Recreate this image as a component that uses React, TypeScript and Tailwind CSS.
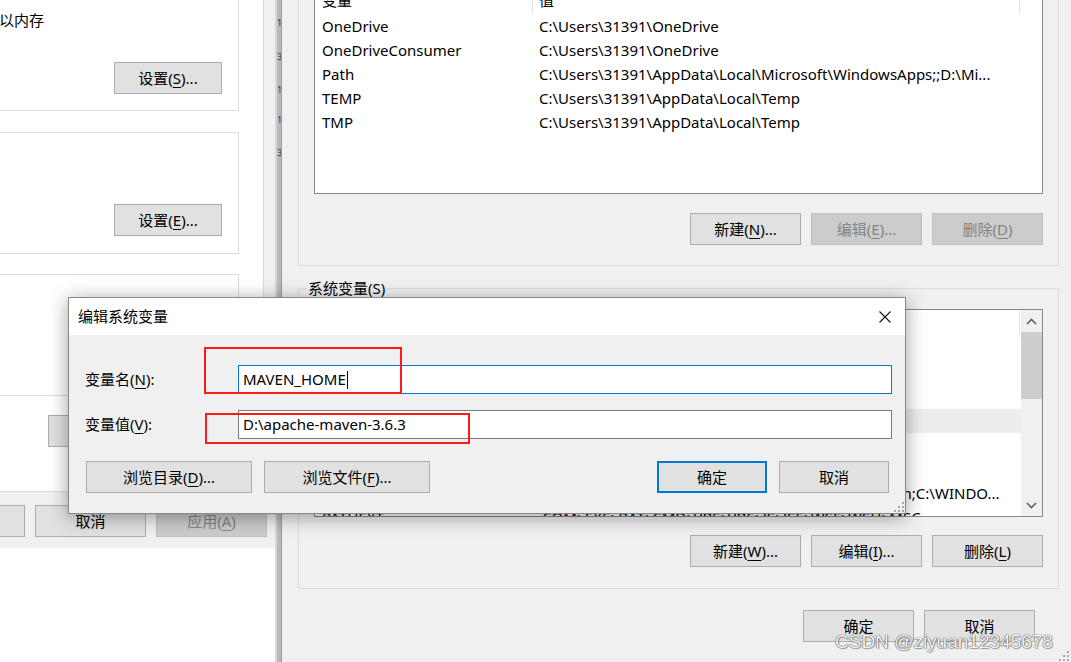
import React from "react";

type BtnProps = {
  children: React.ReactNode;
  className?: string;
  disabled?: boolean;
  primary?: boolean;
};

const Btn = ({ children, className = "w-[111px]", disabled, primary }: BtnProps) => (
  <div
    className={`h-[32px] shrink-0 flex items-center justify-center text-[15px] leading-none whitespace-nowrap ${
      disabled
        ? "bg-[#cccccc] border border-[#bfbfbf] text-[#838383]"
        : primary
        ? "bg-[#e1e1e1] border-2 border-[#0078d7] text-black"
        : "bg-[#e1e1e1] border border-[#adadad] text-black"
    } ${className}`}
  >
    {children}
  </div>
);

// mnemonic letter
const Key = ({ k }: { k: string }) => (
  <span className="underline underline-offset-[3px] decoration-1">{k}</span>
);

const Grip = () => (
  <svg width="12" height="12" viewBox="0 0 12 12">
    <rect x="9" y="1" width="2" height="2" fill="#a8a8a8" />
    <rect x="5" y="5" width="2" height="2" fill="#a8a8a8" />
    <rect x="9" y="5" width="2" height="2" fill="#a8a8a8" />
    <rect x="1" y="9" width="2" height="2" fill="#a8a8a8" />
    <rect x="5" y="9" width="2" height="2" fill="#a8a8a8" />
    <rect x="9" y="9" width="2" height="2" fill="#a8a8a8" />
  </svg>
);

const Chevron = ({ down }: { down?: boolean }) => (
  <svg width="11" height="7" viewBox="0 0 11 7">
    <polyline
      points={down ? "1,1 5.5,5.5 10,1" : "1,6 5.5,1.5 10,6"}
      fill="none"
      stroke="#606060"
      strokeWidth="1.6"
    />
  </svg>
);

const Scrollbar = () => (
  <div className="w-[21px] shrink-0 bg-[#f0f0f0] flex flex-col">
    <div className="h-[22px] flex items-center justify-center">
      <Chevron />
    </div>
    <div className="h-[67px] bg-[#cdcdcd]" />
    <div className="flex-1" />
    <div className="h-[22px] flex items-center justify-center">
      <Chevron down />
    </div>
  </div>
);

type Row = [string, string];

const ListBox = ({
  rows,
  className,
  selected = -1,
  scroll,
}: {
  rows: Row[];
  className: string;
  selected?: number;
  scroll?: boolean;
}) => (
  <div className={`border border-[#828790] bg-white flex overflow-hidden shrink-0 ${className}`}>
    <div className="flex-1 min-w-0 flex flex-col">
      <div className="h-[27px] shrink-0 flex">
        <div className="w-[218px] shrink-0 flex items-center pl-[7px] border-r border-[#e5e5e5]">变量</div>
        <div className="w-[487px] shrink-0 flex items-center pl-[6px] border-r border-[#e5e5e5]">值</div>
      </div>
      {rows.map(([n, v], i) => (
        <div
          key={i}
          className={`h-[24px] shrink-0 flex items-center whitespace-nowrap ${
            i === selected ? "bg-[#ededed]" : ""
          }`}
        >
          <div className="w-[218px] shrink-0 pl-[7px] overflow-hidden">{n}</div>
          <div className="w-[487px] shrink-0 pl-[6px] overflow-hidden">{v}</div>
        </div>
      ))}
    </div>
    {scroll && <Scrollbar />}
  </div>
);

const userRows: Row[] = [
  ["OneDrive", "C:\\Users\\31391\\OneDrive"],
  ["OneDriveConsumer", "C:\\Users\\31391\\OneDrive"],
  ["Path", "C:\\Users\\31391\\AppData\\Local\\Microsoft\\WindowsApps;;D:\\Mi..."],
  ["TEMP", "C:\\Users\\31391\\AppData\\Local\\Temp"],
  ["TMP", "C:\\Users\\31391\\AppData\\Local\\Temp"],
];

const sysRows: Row[] = [
  ["ComSpec", "C:\\WINDOWS\\system32\\cmd.exe"],
  ["DriverData", "C:\\Windows\\System32\\Drivers\\DriverData"],
  ["JAVA_HOME", "C:\\Program Files\\Java\\jdk1.8.0_261"],
  ["MAVEN_HOME", "D:\\apache-maven-3.6.3"],
  ["NUMBER_OF_PROCESSORS", "12"],
  ["OS", "Windows_NT"],
  ["Path", "C:\\Program Files\\Common Files\\Oracle\\Java\\javapath;C:\\WINDO..."],
  ["PATHEXT", ".COM;.EXE;.BAT;.CMD;.VBS;.VBE;.JS;.JSE;.WSF;.WSH;.MSC"],
];

const LeftWindow = () => (
  <div className="absolute left-0 top-0 w-[277px] h-[548px] bg-[#f0f0f0] flex flex-col overflow-hidden">
    <div className="w-[264px] h-[492px] shrink-0 bg-white border-r border-b border-[#d9d9d9] pr-[24px] flex flex-col items-end">
      <div className="-mt-[12px] w-[251px] h-[123px] shrink-0 border border-[#dcdcdc] pt-[21px] pb-[16px] pr-[16px] flex flex-col items-end justify-between self-start -ml-[12px]">
        <div className="self-start pl-[10px] leading-[20px] text-[15px]">以内存</div>
        <Btn className="w-[108px]">
          设置(<Key k="S" />)...
        </Btn>
      </div>
      <div className="mt-[21px] w-[251px] h-[122px] shrink-0 border border-[#dcdcdc] pb-[17px] pr-[16px] flex flex-col items-end justify-end self-start -ml-[12px]">
        <Btn className="w-[108px]">
          设置(<Key k="E" />)...
        </Btn>
      </div>
      <div className="mt-[20px] w-[251px] h-[122px] shrink-0 border border-[#dcdcdc] self-start -ml-[12px]" />
      <Btn className="mt-[19px] w-[191px]">
        环境变量(<Key k="N" />)...
      </Btn>
    </div>
    <div className="mt-[13px] flex justify-end gap-[10px] pr-[10px]">
      <Btn>确定</Btn>
      <Btn>取消</Btn>
      <Btn disabled>
        应用(<Key k="A" />)
      </Btn>
    </div>
  </div>
);

const RightWindow = () => (
  <div className="absolute left-[275px] top-0 h-[662px] flex">
    <div className="relative w-[7px] h-full bg-[#b9b9b9] border-l-2 border-l-[#d6d6d6] border-r border-r-[#9c9c9c] overflow-hidden text-[9px] leading-none text-[#333]">
      <span className="absolute left-0 top-[18px]">1</span>
      <span className="absolute left-0 top-[52px]">3</span>
      <span className="absolute left-0 top-[85px]">1</span>
      <span className="absolute left-0 top-[115px]">1</span>
      <span className="absolute left-0 top-[148px]">3</span>
    </div>
    <div className="relative w-[789px] h-full bg-[#f0f0f0] pl-[16px] flex flex-col">
      <div className="-mt-[20px] w-[761px] h-[286px] shrink-0 border border-[#dcdcdc] px-[15px] pt-[5px] flex flex-col">
        <ListBox rows={userRows} className="h-[208px]" />
        <div className="mt-[19px] flex justify-end gap-[10px]">
          <Btn>
            新建(<Key k="N" />)...
          </Btn>
          <Btn disabled>
            编辑(<Key k="E" />)...
          </Btn>
          <Btn disabled>
            删除(<Key k="D" />)
          </Btn>
        </div>
      </div>

      <div className="relative mt-[22px] w-[761px] h-[301px] shrink-0 border border-[#dcdcdc] px-[15px] pt-[20px] flex flex-col">
        <span className="absolute left-[8px] -top-[11px] bg-[#f0f0f0] px-[1px] leading-[20px] text-[15px]">
          系统变量(<Key k="S" />)
        </span>
        <ListBox rows={sysRows} className="h-[208px]" selected={3} scroll />
        <div className="mt-[18px] flex justify-end gap-[10px]">
          <Btn>
            新建(<Key k="W" />)...
          </Btn>
          <Btn>
            编辑(<Key k="I" />)...
          </Btn>
          <Btn>
            删除(<Key k="L" />)
          </Btn>
        </div>
      </div>

      <div className="mt-[21px] w-[761px] pr-[24px] flex justify-end gap-[10px]">
        <Btn>确定</Btn>
        <Btn>取消</Btn>
      </div>

      <div className="absolute right-[1px] bottom-[0px]">
        <Grip />
      </div>
    </div>
  </div>
);

const EditDialog = () => (
  <div className="absolute left-[68px] top-[297px] w-[838px] h-[217px] border border-[#888888] bg-[#f0f0f0] shadow-[0_3px_18px_rgba(0,0,0,0.38)] flex flex-col">
    <div className="h-[37px] shrink-0 bg-white flex items-center justify-between pl-[9px] pr-[14px]">
      <span className="text-[15px]">编辑系统变量</span>
      <svg width="12" height="12" viewBox="0 0 12 12">
        <path d="M0.5 0.5L11.5 11.5M11.5 0.5L0.5 11.5" stroke="#111" strokeWidth="1.1" />
      </svg>
    </div>
    <div className="flex-1 pl-[16px] pr-[13px] pt-[30px] flex flex-col text-[15px]">
      <div className="flex items-center h-[29px]">
        <div className="w-[153px] shrink-0">
          变量名(<Key k="N" />):
        </div>
        <div className="w-[654px] h-[29px] border border-[#0078d7] bg-white flex items-center pl-[4px]">
          MAVEN_HOME
          <span className="w-px h-[18px] bg-black ml-[1px]" />
        </div>
      </div>
      <div className="mt-[16px] flex items-center h-[29px]">
        <div className="w-[153px] shrink-0">
          变量值(<Key k="V" />):
        </div>
        <div className="w-[654px] h-[29px] border border-[#7a7a7a] bg-white flex items-center pl-[4px]">
          D:\apache-maven-3.6.3
        </div>
      </div>
      <div className="mt-[22px] pr-[3px] flex justify-between">
        <div className="flex gap-[12px] ml-[1px]">
          <Btn className="w-[166px]">
            浏览目录(<Key k="D" />)...
          </Btn>
          <Btn className="w-[166px]">
            浏览文件(<Key k="F" />)...
          </Btn>
        </div>
        <div className="flex gap-[12px]">
          <Btn className="w-[110px]" primary>
            确定
          </Btn>
          <Btn className="w-[110px]">取消</Btn>
        </div>
      </div>
    </div>

    {/* red annotation boxes */}
    <div className="absolute left-[135px] top-[49px] w-[198px] h-[47px] border-2 border-[#ff1a1a]" />
    <div className="absolute left-[136px] top-[115px] w-[265px] h-[31px] border-2 border-[#ff1a1a]" />

    <div className="absolute right-[0px] bottom-[0px]">
      <Grip />
    </div>
  </div>
);

export default function App() {
  return (
    <div className="relative w-[1071px] h-[662px] overflow-hidden bg-white text-black font-['Noto_Sans','Noto_Sans_CJK_SC',sans-serif] text-[15px]">
      <LeftWindow />
      <RightWindow />
      <EditDialog />
      <div className="absolute left-[835px] top-[632px] text-[19px] leading-none whitespace-nowrap font-['Liberation_Sans',sans-serif] text-[#f6f6f6] [text-shadow:0_0_1px_#444,0_0_1px_#444,1px_1px_1px_rgba(0,0,0,0.25)]">
        CSDN @ziyuan12345678
      </div>
    </div>
  );
}
